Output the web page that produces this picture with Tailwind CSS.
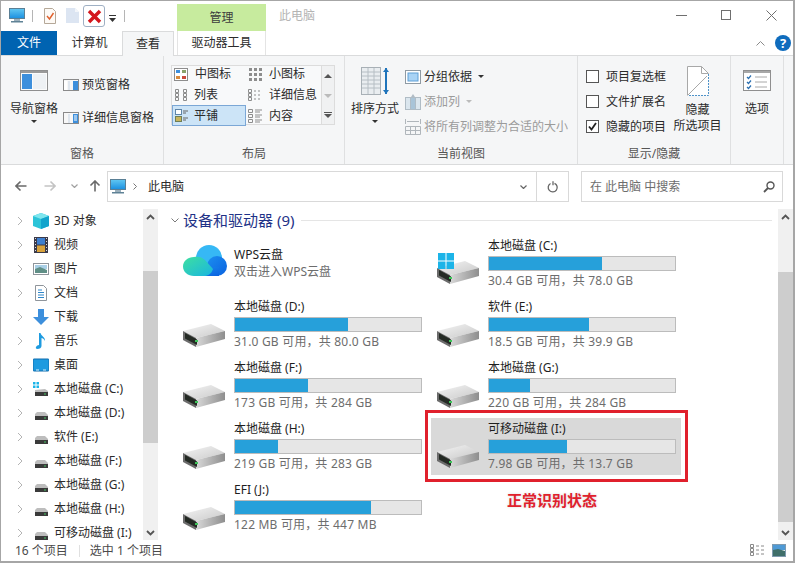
<!DOCTYPE html>
<html lang="zh-CN">

<head>
    <meta charset="UTF-8">
    <title>此电脑</title>
    <meta name="viewport" content="width=device-width, initial-scale=1.0">
    <script src="https://cdn.jsdelivr.net/npm/@tailwindcss/browser@4"></script>
</head>

<body class="bg-white">
    <!-- Iconos compartidos -->
    <svg class="absolute w-0 h-0" width="0" height="0">
        <defs>
            <linearGradient id="driveSide" x1="0" y1="0" x2="1" y2="0">
                <stop offset="0" stop-color="#d8d8d8" />
                <stop offset="1" stop-color="#8e8e8e" />
            </linearGradient>
            <linearGradient id="driveTop" x1="0" y1="0" x2="1" y2="1">
                <stop offset="0" stop-color="#f4f4f4" />
                <stop offset="1" stop-color="#c9c9c9" />
            </linearGradient>
            <linearGradient id="screenBlue" x1="0" y1="0" x2="0" y2="1">
                <stop offset="0" stop-color="#62c8f2" />
                <stop offset="1" stop-color="#1a8fe0" />
            </linearGradient>
            <linearGradient id="cloudLeft" x1="0" y1="0" x2="1" y2="1">
                <stop offset="0" stop-color="#3ee0a0" />
                <stop offset="1" stop-color="#19b5e0" />
            </linearGradient>
            <linearGradient id="cloudRight" x1="0" y1="0" x2="1" y2="1">
                <stop offset="0" stop-color="#1c8ff0" />
                <stop offset="1" stop-color="#0a62e0" />
            </linearGradient>
            <symbol id="drive" viewBox="0 0 44 24">
                <polygon points="0,7 28,0 42,7 13,14" fill="url(#driveTop)" />
                <polygon points="13,14 42,7 42,15 13,23" fill="url(#driveSide)" />
                <polygon points="0,7 13,14 13,23 0,16" fill="#6b6b6b" />
                <polygon points="2,9 14,15.500 14,21 2,14.500" fill="#242a24" />
                <rect x="12" y="16" width="3" height="2" fill="#3fc45a" />
            </symbol>
            <symbol id="pc" viewBox="0 0 16 15">
                <rect x="0.500" y="0.500" width="15" height="10" fill="url(#screenBlue)" stroke="#5a7f95" />
                <rect x="5" y="11" width="6" height="2" fill="#9cb0bc" />
                <rect x="2" y="13" width="12" height="1.500" fill="#5f8296" />
            </symbol>
            <symbol id="paneIcon" viewBox="0 0 16 12">
                <rect x="0.500" y="0.500" width="15" height="11" fill="#f7f7f7" stroke="#8a8a8a" />
                <rect x="1" y="2" width="3" height="9" fill="#fff" />
                <rect x="5" y="2" width="2" height="9" fill="#dfe6ee" />
                <rect x="10" y="2" width="5" height="9" fill="#3d8fdc" />
            </symbol>
        </defs>
    </svg>

    <div class="w-[795px] h-[563px] overflow-hidden flex flex-col border-t border-l border-r-2 border-b-2 border-[#a6a6a6] text-[12px] leading-4 text-[#2b2b2b] font-['Noto_Sans','Noto_Sans_CJK_SC',sans-serif]">

        <!-- Barra de titulo -->
        <div class="h-[30px] flex shrink-0">
            <svg class="w-4 h-[15px] ml-2 mt-[7px]"><use href="#pc" /></svg>
            <div class="w-px h-3 ml-[7px] mt-[9px] bg-[#b5b5b5]"></div>
            <svg class="w-3 h-4 ml-[11px] mt-[7px]" viewBox="0 0 12 16" fill="none">
                <path d="M.5.5h8l3 3v12H.5z" fill="#fdfaf6" stroke="#b5a898" />
                <path d="M3 8l2.500 3L9.500 5" stroke="#e0602c" stroke-width="1.400" />
            </svg>
            <svg class="w-[13px] h-[15px] ml-[10px] mt-[7px]" viewBox="0 0 13 15">
                <path d="M0 0h9l4 4v11H0z" fill="#dce5f2" />
                <path d="M9 0v4h4" fill="#f2f5fa" />
            </svg>
            <div class="w-[22px] h-[22px] ml-1 mt-1 rounded-[3px] border border-[#9fb0c4] flex items-center justify-center bg-white">
                <svg class="w-[15px] h-[15px]" viewBox="0 0 15 15">
                    <path d="M2 2l11 11M13 2L2 13" stroke="#d4161c" stroke-width="3.400" />
                </svg>
            </div>
            <svg class="w-[7px] h-[7px] ml-1 mt-[14px]" viewBox="0 0 7 7">
                <rect width="7" height="1" fill="#333" />
                <path d="M0 3h7L3.500 7z" fill="#333" />
            </svg>
            <div class="w-px h-3 ml-2 mt-[9px] bg-[#b5b5b5]"></div>
            <div class="w-[89px] h-[27px] ml-[52px] mt-[3px] bg-[#c7eb9e] flex items-center justify-center text-[#3d3d3d]">管理</div>
            <div class="ml-[13px] mt-[7px] text-[#b4b4b4]">此电脑</div>
            <div class="ml-auto flex mr-4 mt-[4px] items-start">
                <div class="w-[11px] h-px bg-[#6f6f6f] mt-[10px]"></div>
                <div class="w-[10px] h-[10px] border border-[#6f6f6f] ml-[34px] mt-[5px]"></div>
                <svg class="w-[11px] h-[11px] ml-[35px] mt-[5px]" viewBox="0 0 11 11">
                    <path d="M.5.5l10 10M10.500.5l-10 10" stroke="#6f6f6f" />
                </svg>
            </div>
        </div>

        <!-- Pestanas -->
        <div class="h-6 flex shrink-0 relative z-10">
            <div class="w-14 bg-[#0063b1] text-white flex items-center justify-center">文件</div>
            <div class="w-[65px] flex items-center justify-center">计算机</div>
            <div class="w-[52px] h-[25px] bg-[#f5f6f7] border-x border-t border-[#dadbdc] flex items-center justify-center">查看</div>
            <div class="w-[89px] ml-[3px] border-x border-[#e4e4e4] flex items-center justify-center">驱动器工具</div>
            <div class="ml-auto flex items-center mr-[2px]">
                <svg class="w-[9px] h-[5px] mr-[10px]" viewBox="0 0 9 5" fill="none">
                    <path d="M.5 4.500l4-4 4 4" stroke="#8a8a8a" />
                </svg>
                <div class="w-4 h-4 rounded-full bg-[#0f6cbd] text-white text-[13px] font-bold flex items-center justify-center">?</div>
            </div>
        </div>

        <!-- Cinta -->
        <div class="h-[110px] shrink-0 flex bg-[#f5f6f7] border-y border-[#dadbdc]">

            <!-- Grupo: Panes -->
            <div class="w-[163px] flex flex-col border-r border-[#dfe0e1]">
                <div class="h-[90px] flex">
                    <div class="w-[50px] ml-2 pt-[14px] flex flex-col items-center">
                        <svg class="w-7 h-[21px]" viewBox="0 0 28 21">
                            <rect x="0.500" y="0.500" width="27" height="20" fill="#fbfbfb" stroke="#8f8f8f" />
                            <rect x="1" y="1" width="26" height="2" fill="#9a9a9a" />
                            <rect x="2" y="4" width="10" height="15" fill="#3d8fdc" />
                            <rect x="13" y="4" width="13" height="15" fill="#eef1f4" />
                        </svg>
                        <div class="mt-[10px] whitespace-nowrap">导航窗格</div>
                        <div class="mt-[3px] w-0 h-0 border-x-[3px] border-t-[3px] border-x-transparent border-t-[#333]"></div>
                    </div>
                    <div class="ml-1 pt-[21px] flex flex-col">
                        <div class="flex items-center gap-[3px]">
                            <svg class="w-4 h-3"><use href="#paneIcon" /></svg>
                            <span>预览窗格</span>
                        </div>
                        <div class="flex items-center gap-[3px] mt-[17px]">
                            <svg class="w-4 h-3" viewBox="0 0 16 12">
                                <rect x="0.500" y="0.500" width="15" height="11" fill="#f7f7f7" stroke="#8a8a8a" />
                                <rect x="5" y="2" width="2" height="9" fill="#dfe6ee" />
                                <rect x="10" y="2" width="5" height="9" fill="#3d8fdc" />
                                <path d="M11 4h3M11 6h3M11 8h3" stroke="#fff" />
                            </svg>
                            <span class="whitespace-nowrap">详细信息窗格</span>
                        </div>
                    </div>
                </div>
                <div class="text-center text-[#555]">窗格</div>
            </div>

            <!-- Grupo: Diseno -->
            <div class="w-[181px] flex flex-col border-r border-[#dfe0e1]">
                <div class="h-[90px] pt-[9px] pl-[7px]">
                    <div class="w-[164px] h-[60px] flex border border-[#dcdcdc] bg-[#f8f9fa]">
                        <div class="w-[149px] grid grid-cols-[74px_75px] grid-rows-[18px_21px_21px]">
                            <div class="flex items-center gap-[7px] pl-[2px] pb-[2px]">
                                <svg class="w-[14px] h-[13px] shrink-0" viewBox="0 0 14 13">
                                    <rect x="0.500" y="0.500" width="13" height="12" fill="#fff" stroke="#8d8d8d" />
                                    <rect x="2" y="2" width="4" height="3" fill="#3d8fdc" />
                                    <rect x="8" y="2" width="4" height="3" fill="#8aa36a" />
                                    <rect x="2" y="8" width="4" height="3" fill="#d88a3c" />
                                    <rect x="8" y="8" width="4" height="3" fill="#c94a3c" />
                                </svg>
                                <span>中图标</span>
                            </div>
                            <div class="flex items-center gap-[6px] pl-[2px] pb-[2px]">
                                <svg class="w-[15px] h-[14px] shrink-0 text-[#8d8d8d]" viewBox="0 0 15 14" fill="currentColor">
                                    <path d="M1 1h3v3H1zM6 1h3v3H6zM11 1h3v3h-3zM1 6h3v3H1zM6 6h3v3H6zM11 6h3v3h-3zM1 11h3v3H1zM6 11h3v3H6zM11 11h3v3h-3z" />
                                </svg>
                                <span>小图标</span>
                            </div>
                            <div class="flex items-center gap-[5px] pl-[2px]">
                                <svg class="w-[15px] h-[14px] shrink-0" viewBox="0 0 15 14" fill="none" stroke="#8d8d8d">
                                    <path d="M1.500 1.500h3v3h-3zM1.500 5.500h3v3h-3zM1.500 9.500h3v3h-3zM9.500 1.500h3v3h-3zM9.500 5.500h3v3h-3zM9.500 9.500h3v3h-3z" />
                                </svg>
                                <span>列表</span>
                            </div>
                            <div class="flex items-center gap-[6px] pl-[2px]">
                                <svg class="w-[15px] h-[14px] shrink-0" viewBox="0 0 15 14" fill="none" stroke="#8d8d8d">
                                    <path d="M.500 1.500h3v3h-3zM.500 5.500h3v3h-3zM.500 9.500h3v3h-3zM6 3h2M10 3h2M6 7h2M10 7h2M6 11h2M10 11h2" />
                                </svg>
                                <span>详细信息</span>
                            </div>
                            <div class="flex items-center gap-[5px] pl-[2px] bg-[#cce4f7] border border-[#7ba7d6]">
                                <svg class="w-[14px] h-[14px] shrink-0" viewBox="0 0 14 14">
                                    <rect x="0.500" y="0.500" width="6" height="5" fill="#fff" stroke="#5f85a8" />
                                    <rect x="0.500" y="7.500" width="6" height="5" fill="#c9b45c" stroke="#6f7f56" />
                                    <path d="M8 2h5M8 4h3M8 9h5M8 11h3" stroke="#666" />
                                </svg>
                                <span>平铺</span>
                            </div>
                            <div class="flex items-center gap-[6px] pl-[2px]">
                                <svg class="w-[15px] h-[14px] shrink-0" viewBox="0 0 15 14" fill="none" stroke="#8d8d8d">
                                    <path d="M.500 .500h4v3h-4zM.500 5.500h4v3h-4zM.500 10.500h4v3h-4zM7 1h7M7 3h5M7 6h7M7 8h5M7 11h7M7 13h5" />
                                </svg>
                                <span>内容</span>
                            </div>
                        </div>
                        <div class="w-[14px] border-l border-[#dcdcdc] flex flex-col items-center bg-[#f0f1f2]">
                            <div class="h-[20px] flex items-center"><div class="w-0 h-0 border-x-[4px] border-b-[4px] border-x-transparent border-b-[#555]"></div></div>
                            <div class="h-[20px] flex items-center"><div class="w-0 h-0 border-x-[4px] border-t-[4px] border-x-transparent border-t-[#bbb]"></div></div>
                            <div class="h-[18px] flex flex-col items-center justify-center gap-px">
                                <div class="w-2 h-px bg-[#555]"></div>
                                <div class="w-0 h-0 border-x-[4px] border-t-[4px] border-x-transparent border-t-[#555]"></div>
                            </div>
                        </div>
                    </div>
                </div>
                <div class="text-center text-[#555]">布局</div>
            </div>

            <!-- Grupo: Vista actual -->
            <div class="w-[233px] flex flex-col border-r border-[#dfe0e1]">
                <div class="h-[90px] flex">
                    <div class="w-12 ml-[6px] pt-[11px] flex flex-col items-center">
                        <svg class="w-7 h-7" viewBox="0 0 28 28">
                            <rect x="0.500" y="0.500" width="19" height="27" fill="#e9edf0" stroke="#a8b0b6" />
                            <path d="M1 5h18M1 9h18M1 13h18M1 17h18M1 21h18M7 1v26M13 1v26" stroke="#b6bec4" />
                            <path d="M25 1v26" stroke="#1f74bb" stroke-width="2" />
                            <path d="M22 5l3-4 3 4M22 23l3 4 3-4" fill="#1f74bb" />
                        </svg>
                        <div class="mt-[6px] whitespace-nowrap">排序方式</div>
                        <div class="mt-[3px] w-0 h-0 border-x-[3px] border-t-[3px] border-x-transparent border-t-[#333]"></div>
                    </div>
                    <div class="ml-[6px] pt-2 flex flex-col">
                        <div class="h-[25px] flex items-center gap-[3px]">
                            <svg class="w-4 h-4" viewBox="0 0 16 16">
                                <rect x="0.500" y="1.500" width="15" height="13" fill="#fff" stroke="#8f9aa3" />
                                <rect x="3" y="4" width="10" height="8" fill="#a9d3f5" stroke="#5f9fd6" />
                            </svg>
                            <span>分组依据</span>
                            <div class="ml-[3px] w-0 h-0 border-x-[3px] border-t-[3px] border-x-transparent border-t-[#333]"></div>
                        </div>
                        <div class="h-[25px] flex items-center gap-[3px] text-[#9b9b9b]">
                            <svg class="w-4 h-4" viewBox="0 0 16 16">
                                <rect x="0.500" y="3.500" width="15" height="12" fill="#dbe6ee" stroke="#b0bcc5" />
                                <path d="M5.500 4v11M10.500 4v11" stroke="#b0bcc5" />
                                <rect x="6" y="4" width="4" height="11" fill="#a9c4d8" />
                                <path d="M6 3l2-3 2 3z" fill="#b0bcc5" />
                            </svg>
                            <span>添加列</span>
                            <div class="ml-[3px] w-0 h-0 border-x-[3px] border-t-[3px] border-x-transparent border-t-[#bbb]"></div>
                        </div>
                        <div class="h-[25px] flex items-center gap-[3px] text-[#9b9b9b]">
                            <svg class="w-4 h-4" viewBox="0 0 16 16" fill="none" stroke="#b0b6bb">
                                <path d="M.500 0v5M15.500 0v5M2 2.500h12M.500 7.500h15v8H.500zM.500 11.500h15M5.500 7.500v8M10.500 7.500v8" />
                            </svg>
                            <span class="whitespace-nowrap">将所有列调整为合适的大小</span>
                        </div>
                    </div>
                </div>
                <div class="text-center text-[#555]">当前视图</div>
            </div>

            <!-- Grupo: Mostrar -->
            <div class="w-[153px] flex flex-col border-r border-[#dfe0e1]">
                <div class="h-[90px] flex">
                    <div class="ml-2 pt-2 flex flex-col">
                        <div class="h-[25px] flex items-center gap-[7px]">
                            <div class="w-[13px] h-[13px] border border-[#555] bg-white"></div>
                            <span>项目复选框</span>
                        </div>
                        <div class="h-[25px] flex items-center gap-[7px]">
                            <div class="w-[13px] h-[13px] border border-[#555] bg-white"></div>
                            <span>文件扩展名</span>
                        </div>
                        <div class="h-[25px] flex items-center gap-[7px]">
                            <div class="w-[13px] h-[13px] border border-[#555] bg-white flex items-center justify-center">
                                <svg class="w-[9px] h-[9px]" viewBox="0 0 9 9" fill="none">
                                    <path d="M1 4.500l2.500 3L8 1" stroke="#222" stroke-width="1.800" />
                                </svg>
                            </div>
                            <span class="whitespace-nowrap">隐藏的项目</span>
                        </div>
                    </div>
                    <div class="w-[55px] ml-1 pt-[10px] flex flex-col items-center">
                        <svg class="w-[22px] h-[30px]" viewBox="0 0 22 30" fill="none">
                            <path d="M.500 29.500V.500h14l7 7v22z" fill="#fff" />
                            <path d="M21.500 8v21.500H1" stroke="#4f93c9" stroke-dasharray="2 1" />
                            <path d="M.500 29.500V.500h14l7 7M14.500.500v7h7M1 29L20 10" stroke="#a8a8a8" />
                        </svg>
                        <div class="mt-[6px]">隐藏</div>
                        <div class="mt-0 whitespace-nowrap">所选项目</div>
                    </div>
                </div>
                <div class="text-center text-[#555]">显示/隐藏</div>
            </div>

            <!-- Grupo: Opciones -->
            <div class="w-[53px] flex flex-col border-r border-[#dfe0e1]">
                <div class="h-[90px] pt-[14px] flex flex-col items-center">
                    <svg class="w-7 h-[21px]" viewBox="0 0 28 21" fill="none">
                        <rect x="0.500" y="0.500" width="27" height="20" fill="#fff" stroke="#8f8f8f" />
                        <rect x="1" y="1" width="26" height="2" fill="#a8a8a8" />
                        <path d="M4 7l1.500 1.500L8 5.500M4 12l1.500 1.500L8 10.500M4 17l1.500 1.500L8 15.500" stroke="#2b6fb0" stroke-width="1.200" />
                        <path d="M12 7h12M12 12h12M12 17h12" stroke="#a8a8a8" />
                    </svg>
                    <div class="mt-[10px]">选项</div>
                </div>
            </div>
        </div>

        <!-- Barra de direcciones -->
        <div class="h-[38px] shrink-0 flex items-start pt-[5px]">
            <svg class="w-3 h-3 ml-[14px] mt-[10px]" viewBox="0 0 12 12" fill="none">
                <path d="M11.500 6H1M5.500 1.500L1 6l4.500 4.500" stroke="#6a6a6a" stroke-width="1.600" />
            </svg>
            <svg class="w-3 h-3 ml-[17px] mt-[10px]" viewBox="0 0 12 12" fill="none">
                <path d="M.5 6H11M6.500 1.500L11 6l-4.500 4.500" stroke="#c4c4c4" stroke-width="1.600" />
            </svg>
            <svg class="w-[7px] h-1 ml-[15px] mt-[14px]" viewBox="0 0 7 4" fill="none">
                <path d="M.5.5l3 3 3-3" stroke="#a0a0a0" stroke-width="1.200" />
            </svg>
            <svg class="w-3 h-3 ml-[11px] mt-[10px]" viewBox="0 0 12 12" fill="none">
                <path d="M6 11.500V1M1.500 5.500L6 1l4.500 4.500" stroke="#6a6a6a" stroke-width="1.600" />
            </svg>
            <div class="ml-[6px] w-[462px] h-[31px] flex items-center border border-[#d9d9d9] mt-[1px]">
                <svg class="w-4 h-[15px] ml-[2px]"><use href="#pc" /></svg>
                <svg class="w-1 h-[7px] ml-[7px]" viewBox="0 0 4 7" fill="none">
                    <path d="M.5.5l3 3-3 3" stroke="#777" />
                </svg>
                <span class="ml-[11px]">此电脑</span>
                <svg class="w-[7px] h-1 ml-auto mr-[9px]" viewBox="0 0 7 4" fill="none">
                    <path d="M.5.5l3 3 3-3" stroke="#666" stroke-width="1.200" />
                </svg>
                <div class="w-[32px] h-full border-l border-[#d9d9d9] flex items-center justify-center">
                    <svg class="w-3 h-3" viewBox="0 0 12 12" fill="none">
                        <path d="M7.500 2.300A4.500 4.500 0 1 1 3.500 2.500M6 .2v4" stroke="#666" stroke-width="1.300" />
                    </svg>
                </div>
            </div>
            <div class="ml-3 w-[202px] h-[31px] flex items-center border border-[#d9d9d9] mt-[1px] text-[#6d6d6d]">
                <span class="ml-2">在 此电脑 中搜索</span>
                <svg class="w-3 h-3 ml-auto mr-[7px]" viewBox="0 0 12 12" fill="none">
                    <circle cx="7.500" cy="4.500" r="3.500" stroke="#555" stroke-width="1.400" />
                    <path d="M5 7l-4 4" stroke="#555" stroke-width="1.800" />
                </svg>
            </div>
        </div>

        <!-- Contenido -->
        <div class="h-[337px] shrink-0 flex overflow-hidden">

            <!-- Arbol de navegacion -->
            <div class="w-[142px] shrink-0 pt-[6px] overflow-hidden">
                <div class="h-6 flex items-center">
                    <svg class="w-[6px] h-[10px] ml-4 shrink-0" viewBox="0 0 6 10" fill="none"><path d="M1 1l4 4-4 4" stroke="#b4b4b4" /></svg>
                    <svg class="w-4 h-4 ml-[10px] shrink-0" viewBox="0 0 16 16">
                        <path d="M8 0l8 3v10l-8 3-8-3V3z" fill="#2cc4d8" />
                        <path d="M8 0l8 3-8 3-8-3z" fill="#7fe6ee" />
                        <path d="M8 6l8-3v10l-8 3z" fill="#12a4cc" />
                    </svg>
                    <span class="ml-[5px]">3D 对象</span>
                </div>
                <div class="h-6 flex items-center">
                    <svg class="w-[6px] h-[10px] ml-4 shrink-0" viewBox="0 0 6 10" fill="none"><path d="M1 1l4 4-4 4" stroke="#b4b4b4" /></svg>
                    <svg class="w-4 h-4 ml-[10px] shrink-0" viewBox="0 0 16 16">
                        <rect x="1" width="14" height="16" fill="#3a3a4a" />
                        <rect x="4" y="1" width="8" height="6.500" fill="#3d7fd0" />
                        <rect x="4" y="8.500" width="8" height="6.500" fill="#d8a23c" />
                        <path d="M2 1.500h1M2 4.500h1M2 7.500h1M2 10.500h1M2 13.500h1M13 1.500h1M13 4.500h1M13 7.500h1M13 10.500h1M13 13.500h1" stroke="#ddd" />
                    </svg>
                    <span class="ml-[5px]">视频</span>
                </div>
                <div class="h-6 flex items-center">
                    <svg class="w-[6px] h-[10px] ml-4 shrink-0" viewBox="0 0 6 10" fill="none"><path d="M1 1l4 4-4 4" stroke="#b4b4b4" /></svg>
                    <svg class="w-4 h-4 ml-[10px] shrink-0" viewBox="0 0 16 16">
                        <rect x="0.500" y="2.500" width="15" height="11" fill="#fff" stroke="#8f959b" />
                        <rect x="2" y="4" width="12" height="4" fill="#a9cfe6" />
                        <path d="M2 8l5-2 7 3v3H2z" fill="#5f8f86" />
                    </svg>
                    <span class="ml-[5px]">图片</span>
                </div>
                <div class="h-6 flex items-center">
                    <svg class="w-[6px] h-[10px] ml-4 shrink-0" viewBox="0 0 6 10" fill="none"><path d="M1 1l4 4-4 4" stroke="#b4b4b4" /></svg>
                    <svg class="w-4 h-4 ml-[10px] shrink-0" viewBox="0 0 16 16" fill="none">
                        <path d="M2.500.5h8l3 3v12h-11z" fill="#fff" stroke="#8f959b" />
                        <path d="M5 5h4M5 7.500h6M5 10h6M5 12.500h6" stroke="#2f86c9" />
                    </svg>
                    <span class="ml-[5px]">文档</span>
                </div>
                <div class="h-6 flex items-center">
                    <svg class="w-[6px] h-[10px] ml-4 shrink-0" viewBox="0 0 6 10" fill="none"><path d="M1 1l4 4-4 4" stroke="#b4b4b4" /></svg>
                    <svg class="w-4 h-4 ml-[10px] shrink-0" viewBox="0 0 16 16">
                        <path d="M5 0h6v8h5l-8 8-8-8h5z" fill="#3d8fdc" />
                    </svg>
                    <span class="ml-[5px]">下载</span>
                </div>
                <div class="h-6 flex items-center">
                    <svg class="w-[6px] h-[10px] ml-4 shrink-0" viewBox="0 0 6 10" fill="none"><path d="M1 1l4 4-4 4" stroke="#b4b4b4" /></svg>
                    <svg class="w-4 h-4 ml-[10px] shrink-0" viewBox="0 0 16 16">
                        <path d="M6 0h1.500c.5 3 5 4 4.500 8-.8-2-2.500-3-3.500-3v8c0 2-2 3-4 3-1.500 0-2-1-1.500-2 .5-1.300 2-2 3-2V0z" fill="#1e9be0" />
                    </svg>
                    <span class="ml-[5px]">音乐</span>
                </div>
                <div class="h-6 flex items-center">
                    <svg class="w-[6px] h-[10px] ml-4 shrink-0" viewBox="0 0 6 10" fill="none"><path d="M1 1l4 4-4 4" stroke="#b4b4b4" /></svg>
                    <svg class="w-4 h-4 ml-[10px] shrink-0" viewBox="0 0 16 16">
                        <rect y="2" width="16" height="12" rx="1" fill="#1e9be0" stroke="#0f6cae" />
                        <path d="M3 13h3M10 13h3" stroke="#d8eefb" />
                    </svg>
                    <span class="ml-[5px]">桌面</span>
                </div>
                <div class="h-6 flex items-center">
                    <svg class="w-[6px] h-[10px] ml-4 shrink-0" viewBox="0 0 6 10" fill="none"><path d="M1 1l4 4-4 4" stroke="#b4b4b4" /></svg>
                    <svg class="w-4 h-4 ml-[10px] shrink-0" viewBox="0 0 16 16">
                        <path d="M0 1h2.500v2.500H0zM3.500 1H6v2.500H3.500zM0 4.500h2.500V7H0zM3.500 4.500H6V7H3.500z" fill="#1cb4e8" />
                        <path d="M2 9l10-1 3 2v4H2z" fill="#bdbdbd" />
                        <rect x="2" y="11" width="13" height="4" fill="#3a3a3a" />
                        <rect x="11" y="12.500" width="2" height="1" fill="#45c463" />
                    </svg>
                    <span class="ml-[5px]">本地磁盘 (C:)</span>
                </div>
                <div class="h-6 flex items-center">
                    <svg class="w-[6px] h-[10px] ml-4 shrink-0" viewBox="0 0 6 10" fill="none"><path d="M1 1l4 4-4 4" stroke="#b4b4b4" /></svg>
                    <svg class="w-4 h-4 ml-[10px] shrink-0" viewBox="0 0 16 16">
                        <path d="M2 9l2-2h8l3 3v4H2z" fill="#bdbdbd" />
                        <rect x="2" y="11" width="13" height="4" fill="#3a3a3a" />
                        <rect x="11" y="12.500" width="2" height="1" fill="#45c463" />
                    </svg>
                    <span class="ml-[5px]">本地磁盘 (D:)</span>
                </div>
                <div class="h-6 flex items-center">
                    <svg class="w-[6px] h-[10px] ml-4 shrink-0" viewBox="0 0 6 10" fill="none"><path d="M1 1l4 4-4 4" stroke="#b4b4b4" /></svg>
                    <svg class="w-4 h-4 ml-[10px] shrink-0" viewBox="0 0 16 16">
                        <path d="M2 9l2-2h8l3 3v4H2z" fill="#bdbdbd" />
                        <rect x="2" y="11" width="13" height="4" fill="#3a3a3a" />
                        <rect x="11" y="12.500" width="2" height="1" fill="#45c463" />
                    </svg>
                    <span class="ml-[5px]">软件 (E:)</span>
                </div>
                <div class="h-6 flex items-center">
                    <svg class="w-[6px] h-[10px] ml-4 shrink-0" viewBox="0 0 6 10" fill="none"><path d="M1 1l4 4-4 4" stroke="#b4b4b4" /></svg>
                    <svg class="w-4 h-4 ml-[10px] shrink-0" viewBox="0 0 16 16">
                        <path d="M2 9l2-2h8l3 3v4H2z" fill="#bdbdbd" />
                        <rect x="2" y="11" width="13" height="4" fill="#3a3a3a" />
                        <rect x="11" y="12.500" width="2" height="1" fill="#45c463" />
                    </svg>
                    <span class="ml-[5px]">本地磁盘 (F:)</span>
                </div>
                <div class="h-6 flex items-center">
                    <svg class="w-[6px] h-[10px] ml-4 shrink-0" viewBox="0 0 6 10" fill="none"><path d="M1 1l4 4-4 4" stroke="#b4b4b4" /></svg>
                    <svg class="w-4 h-4 ml-[10px] shrink-0" viewBox="0 0 16 16">
                        <path d="M2 9l2-2h8l3 3v4H2z" fill="#bdbdbd" />
                        <rect x="2" y="11" width="13" height="4" fill="#3a3a3a" />
                        <rect x="11" y="12.500" width="2" height="1" fill="#45c463" />
                    </svg>
                    <span class="ml-[5px]">本地磁盘 (G:)</span>
                </div>
                <div class="h-6 flex items-center">
                    <svg class="w-[6px] h-[10px] ml-4 shrink-0" viewBox="0 0 6 10" fill="none"><path d="M1 1l4 4-4 4" stroke="#b4b4b4" /></svg>
                    <svg class="w-4 h-4 ml-[10px] shrink-0" viewBox="0 0 16 16">
                        <path d="M2 9l2-2h8l3 3v4H2z" fill="#bdbdbd" />
                        <rect x="2" y="11" width="13" height="4" fill="#3a3a3a" />
                        <rect x="11" y="12.500" width="2" height="1" fill="#45c463" />
                    </svg>
                    <span class="ml-[5px]">本地磁盘 (H:)</span>
                </div>
                <div class="h-6 flex items-center">
                    <svg class="w-[6px] h-[10px] ml-4 shrink-0" viewBox="0 0 6 10" fill="none"><path d="M1 1l4 4-4 4" stroke="#b4b4b4" /></svg>
                    <svg class="w-4 h-4 ml-[10px] shrink-0" viewBox="0 0 16 16">
                        <path d="M2 9l2-2h8l3 3v4H2z" fill="#bdbdbd" />
                        <rect x="2" y="11" width="13" height="4" fill="#3a3a3a" />
                        <rect x="11" y="12.500" width="2" height="1" fill="#45c463" />
                    </svg>
                    <span class="ml-[5px] whitespace-nowrap">可移动磁盘 (I:)</span>
                </div>
            </div>

            <!-- Scroll del arbol -->
            <div class="w-[15px] shrink-0 mt-[6px] bg-[#f0f0f0] flex flex-col">
                <div class="h-[62px] pt-[5px] flex justify-center items-start">
                    <svg class="w-[9px] h-[6px]" viewBox="0 0 9 6" fill="none"><path d="M1 5l3.500-3.500L8 5" stroke="#555" stroke-width="1.800" /></svg>
                </div>
                <div class="h-[172px] bg-[#cdcdcd]"></div>
                <div class="flex-1 flex justify-center items-end pb-[4px]">
                    <svg class="w-[9px] h-[6px]" viewBox="0 0 9 6" fill="none"><path d="M1 1l3.500 3.500L8 1" stroke="#555" stroke-width="1.800" /></svg>
                </div>
            </div>

            <!-- Lista de unidades -->
            <div class="w-[620px] shrink-0 pt-[7px]">
                <div class="h-5 flex items-center pl-[13px]">
                    <svg class="w-2 h-[5px] shrink-0" viewBox="0 0 8 5" fill="none"><path d="M.5.500L4 4 7.500.500" stroke="#7a7a7a" /></svg>
                    <span class="ml-1 text-[15px] leading-5 text-[#1e3287] whitespace-nowrap">设备和驱动器 (9)</span>
                    <div class="ml-[7px] w-[471px] h-px bg-[#e5e5e5]"></div>
                </div>
                <div class="mt-[5px] ml-[19px] grid grid-cols-[250px_250px] auto-rows-[57px] gap-x-1 gap-y-1">

                    <div class="flex">
                        <svg class="w-[44px] h-[34px] ml-[6px] mt-[10px] shrink-0" viewBox="0 0 44 34">
                            <circle cx="26" cy="13" r="13" fill="#36b8f5" />
                            <circle cx="34" cy="21" r="10" fill="url(#cloudRight)" />
                            <rect x="12" y="22" width="24" height="9" fill="url(#cloudRight)" />
                            <path d="M11 12c4-1 8 0 11 3l8 9c-2 6-6 7-9 7H11C5 31 0 27 0 21.500S5 12 11 12z" fill="url(#cloudLeft)" />
                        </svg>
                        <div class="ml-[7px] pt-3">
                            <div class="text-[#1e1e1e]">WPS云盘</div>
                            <div class="mt-px text-[#6d6d6d]">双击进入WPS云盘</div>
                        </div>
                    </div>

                    <div class="flex relative">
                        <div class="relative w-[44px] h-[24px] ml-[6px] mt-[26px] shrink-0">
                            <svg class="w-[44px] h-[24px]"><use href="#drive" /></svg>
                            <svg class="absolute left-px -top-2 w-4 h-4" viewBox="0 0 16 16" fill="#1cb4e8">
                                <path d="M0 0h7.500v7.500H0zM8.500 0H16v7.500H8.500zM0 8.500h7.500V16H0zM8.500 8.500H16V16H8.500z" />
                            </svg>
                        </div>
                        <div class="ml-[7px] pt-[3px]">
                            <div class="text-[#1e1e1e]">本地磁盘 (C:)</div>
                            <div class="mt-[2px] w-[188px] h-[15px] bg-[#e6e6e6] border border-[#bcbcbc]"><div class="h-full w-[61%] bg-[#26a0da]"></div></div>
                            <div class="mt-[2px] text-[#6d6d6d] whitespace-nowrap tracking-[0.2px]">30.4 GB 可用，共 78.0 GB</div>
                        </div>
                    </div>

                    <div class="flex">
                        <svg class="w-[44px] h-[24px] ml-[6px] mt-[28px] shrink-0"><use href="#drive" /></svg>
                        <div class="ml-[7px] pt-[3px]">
                            <div class="text-[#1e1e1e]">本地磁盘 (D:)</div>
                            <div class="mt-[2px] w-[188px] h-[15px] bg-[#e6e6e6] border border-[#bcbcbc]"><div class="h-full w-[61%] bg-[#26a0da]"></div></div>
                            <div class="mt-[2px] text-[#6d6d6d] whitespace-nowrap tracking-[0.2px]">31.0 GB 可用，共 80.0 GB</div>
                        </div>
                    </div>

                    <div class="flex">
                        <svg class="w-[44px] h-[24px] ml-[6px] mt-[28px] shrink-0"><use href="#drive" /></svg>
                        <div class="ml-[7px] pt-[3px]">
                            <div class="text-[#1e1e1e]">软件 (E:)</div>
                            <div class="mt-[2px] w-[188px] h-[15px] bg-[#e6e6e6] border border-[#bcbcbc]"><div class="h-full w-[54%] bg-[#26a0da]"></div></div>
                            <div class="mt-[2px] text-[#6d6d6d] whitespace-nowrap tracking-[0.2px]">18.5 GB 可用，共 39.9 GB</div>
                        </div>
                    </div>

                    <div class="flex">
                        <svg class="w-[44px] h-[24px] ml-[6px] mt-[28px] shrink-0"><use href="#drive" /></svg>
                        <div class="ml-[7px] pt-[3px]">
                            <div class="text-[#1e1e1e]">本地磁盘 (F:)</div>
                            <div class="mt-[2px] w-[188px] h-[15px] bg-[#e6e6e6] border border-[#bcbcbc]"><div class="h-full w-[39%] bg-[#26a0da]"></div></div>
                            <div class="mt-[2px] text-[#6d6d6d] whitespace-nowrap tracking-[0.2px]">173 GB 可用，共 284 GB</div>
                        </div>
                    </div>

                    <div class="flex">
                        <svg class="w-[44px] h-[24px] ml-[6px] mt-[28px] shrink-0"><use href="#drive" /></svg>
                        <div class="ml-[7px] pt-[3px]">
                            <div class="text-[#1e1e1e]">本地磁盘 (G:)</div>
                            <div class="mt-[2px] w-[188px] h-[15px] bg-[#e6e6e6] border border-[#bcbcbc]"><div class="h-full w-[22%] bg-[#26a0da]"></div></div>
                            <div class="mt-[2px] text-[#6d6d6d] whitespace-nowrap tracking-[0.2px]">220 GB 可用，共 284 GB</div>
                        </div>
                    </div>

                    <div class="flex">
                        <svg class="w-[44px] h-[24px] ml-[6px] mt-[28px] shrink-0"><use href="#drive" /></svg>
                        <div class="ml-[7px] pt-[3px]">
                            <div class="text-[#1e1e1e]">本地磁盘 (H:)</div>
                            <div class="mt-[2px] w-[188px] h-[15px] bg-[#e6e6e6] border border-[#bcbcbc]"><div class="h-full w-[23%] bg-[#26a0da]"></div></div>
                            <div class="mt-[2px] text-[#6d6d6d] whitespace-nowrap tracking-[0.2px]">219 GB 可用，共 283 GB</div>
                        </div>
                    </div>

                    <!-- Unidad seleccionada con marco rojo -->
                    <div class="flex relative bg-[#d9d9d9]">
                        <div class="absolute -top-2 -left-[6px] -right-[7px] -bottom-[7px] border-[3px] border-[#e0202c]"></div>
                        <svg class="w-[44px] h-[24px] ml-[6px] mt-[27px] shrink-0"><use href="#drive" /></svg>
                        <div class="ml-[7px] pt-[3px]">
                            <div class="text-[#1e1e1e]">可移动磁盘 (I:)</div>
                            <div class="mt-[2px] w-[188px] h-[15px] bg-[#e6e6e6] border border-[#bcbcbc]"><div class="h-full w-[42%] bg-[#26a0da]"></div></div>
                            <div class="mt-[2px] text-[#6d6d6d] whitespace-nowrap tracking-[0.2px]">7.98 GB 可用，共 13.7 GB</div>
                        </div>
                    </div>

                    <div class="flex">
                        <svg class="w-[44px] h-[24px] ml-[6px] mt-[28px] shrink-0"><use href="#drive" /></svg>
                        <div class="ml-[7px] pt-[3px]">
                            <div class="text-[#1e1e1e]">EFI (J:)</div>
                            <div class="mt-[2px] w-[188px] h-[15px] bg-[#e6e6e6] border border-[#bcbcbc]"><div class="h-full w-[73%] bg-[#26a0da]"></div></div>
                            <div class="mt-[2px] text-[#6d6d6d] whitespace-nowrap tracking-[0.2px]">122 MB 可用，共 447 MB</div>
                        </div>
                    </div>

                    <div class="pl-[76px] pt-[11px]">
                        <span class="text-[15px] leading-5 font-bold text-[#e0202c] [text-shadow:0_0_3px_#d8d8d8]">正常识别状态</span>
                    </div>
                </div>
            </div>

            <!-- Scroll principal -->
            <div class="w-[15px] shrink-0 mt-[6px] bg-[#f0f0f0] flex flex-col">
                <div class="h-[63px] pt-[5px] flex justify-center items-start">
                    <svg class="w-[9px] h-[6px]" viewBox="0 0 9 6" fill="none"><path d="M1 5l3.500-3.500L8 5" stroke="#555" stroke-width="1.800" /></svg>
                </div>
                <div class="h-[250px] bg-[#cdcdcd]"></div>
                <div class="flex-1 flex justify-center items-end pb-[4px]">
                    <svg class="w-[9px] h-[6px]" viewBox="0 0 9 6" fill="none"><path d="M1 1l3.500 3.500L8 1" stroke="#555" stroke-width="1.800" /></svg>
                </div>
            </div>
        </div>

        <!-- Barra de estado -->
        <div class="flex-1 flex items-center text-[#4a4a4a]">
            <span class="ml-[14px]">16 个项目</span>
            <div class="ml-[11px] w-px h-3 bg-[#e0e0e0]"></div>
            <span class="ml-[10px]">选中 1 个项目</span>
            <svg class="ml-auto w-4 h-[13px]" viewBox="0 0 16 13" fill="none" stroke="#8a8a8a">
                <path d="M.5.5h3v3h-3zM.5 4.500h3v3h-3zM.5 8.500h3v3h-3zM6 2h3M11 2h3M6 6h3M11 6h3M6 10h3M11 10h3" />
            </svg>
            <svg class="ml-[6px] mr-[7px] w-[14px] h-[13px]" viewBox="0 0 14 13">
                <rect x="0.500" y="0.500" width="13" height="12" fill="#fff" stroke="#7f9bb0" />
                <rect x="1" y="1" width="12" height="5" fill="#4f9ad6" />
                <path d="M1 6l5-1 7 2v5H1z" fill="#3f6f6a" />
            </svg>
        </div>
    </div>
</body>

</html>
